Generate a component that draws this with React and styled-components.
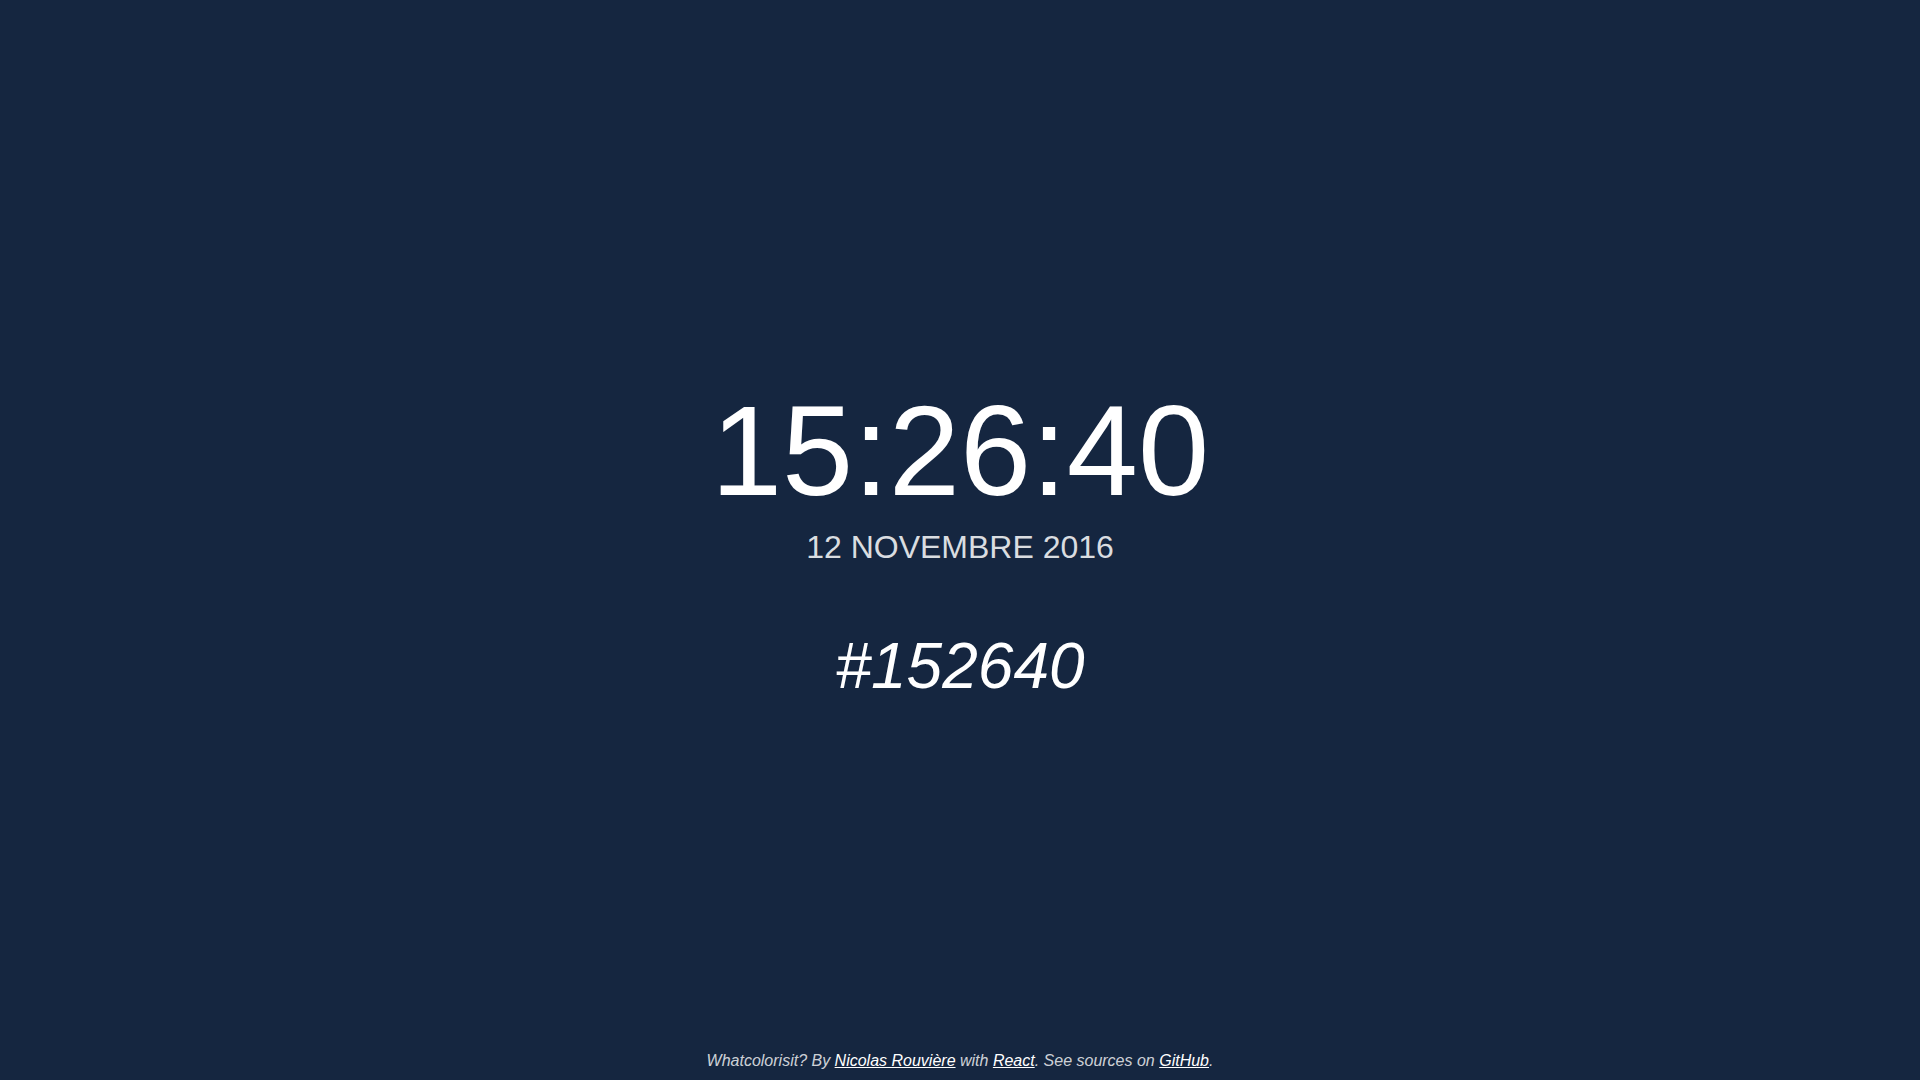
import React from 'react';
import styled, { createGlobalStyle } from 'styled-components';

const GlobalStyle = createGlobalStyle`
    html, body {
        margin: 0;
        padding: 0;
        height: 100%;
    }
    body {
        background-color: #152640;
        font-family: "Liberation Sans", Arial, sans-serif;
        color: #fff;
    }
`

const Page = styled.div`
    height: 100vh;
    display: grid;
    grid-template-rows: 1fr auto 1fr;
    justify-items: center;
    background-color: #152640;
`
const Clock = styled.main`
    grid-row: 2;
    display: flex;
    flex-direction: column;
    align-items: center;
`
const Time = styled.div`
    font-size: 128px;
    line-height: normal;
    color: #fff;
`
const Day = styled.div`
    margin-top: 5px;
    font-size: 32px;
    line-height: normal;
    text-transform: uppercase;
    color: rgba(255,255,255,0.85);
`
const Hex = styled.div`
    margin-top: 63px;
    font-size: 64px;
    line-height: normal;
    font-style: italic;
    color: #fff;
`
const Footer = styled.footer`
    grid-row: 3;
    align-self: end;
    padding-bottom: 10px;
    font-size: 16px;
    line-height: normal;
    font-style: italic;
    color: rgba(255,255,255,0.8);
`
const Link = styled.a`
    color: #fff;
    text-decoration: underline;
`

export default function App(){
    return(
        <>
            <GlobalStyle/>
            <Page>
                <Clock>
                    <Time>15:26:40</Time>
                    <Day>12 novembre 2016</Day>
                    <Hex>#152640</Hex>
                </Clock>
                <Footer>
                    Whatcolorisit? By <Link href="#">Nicolas Rouvière</Link> with <Link href="#">React</Link>. See sources on <Link href="#">GitHub</Link>.
                </Footer>
            </Page>
        </>
    )
}
